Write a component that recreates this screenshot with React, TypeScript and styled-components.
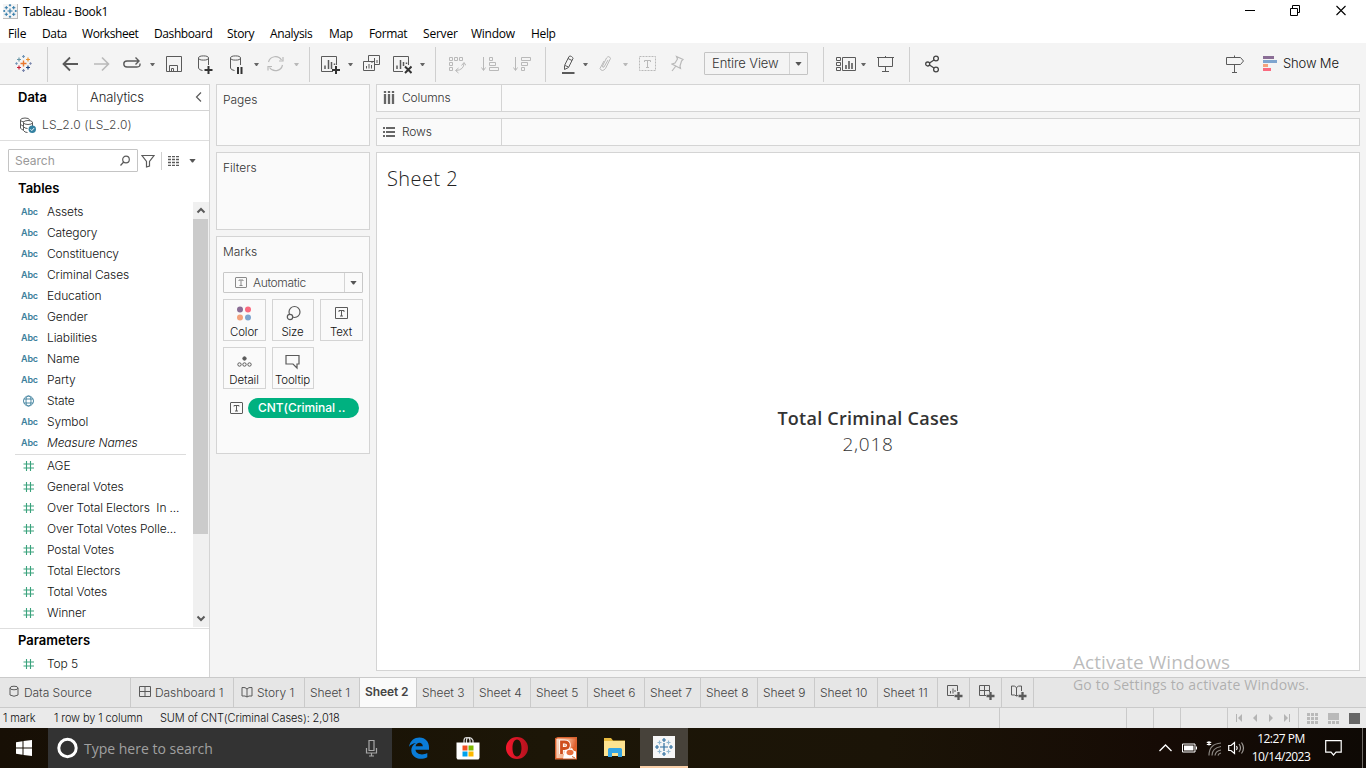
import React from 'react';
import styled, { createGlobalStyle, css } from 'styled-components';

const GlobalStyle = createGlobalStyle`
  * { box-sizing: border-box; }
  body { margin: 0; overflow: hidden; background: #fff; }
  svg { display: block; flex: none; }
`;

const ui = '"Inter", "Roboto", sans-serif';
const system = '"Open Sans", "Noto Sans", sans-serif';
const line = '#d4d4d4';
const ink = '#5a5a5a';
const faint = '#b9b9b9';

const Page = styled.div`
  width: 1366px;
  height: 768px;
  display: flex;
  flex-direction: column;
  position: relative;
  font: 300 12px ${ui};
  letter-spacing: -0.12px;
  color: #222;
  background: #f4f4f4;
  white-space: pre;
`;

/* ---------- window chrome ---------- */
const TitleBar = styled.header`
  height: 22px;
  background: #fff;
  display: flex;
  align-items: center;
  padding: 1px 20px 0 3px;
  font: 12px ${system};
  letter-spacing: -0.33px;
  color: #000;
`;
const AppIcon = styled.span`
  width: 15px;
  height: 15px;
  margin-right: 5px;
  background: #f4f4f4;
  border-right: 1px solid #bbb;
  border-bottom: 1px solid #bbb;
`;
const Grow = styled.span`flex: 1;`;
const WindowButton = styled.span<{ $ml?: number }>`
  margin: -2px 0 0 ${p => p.$ml ?? 0}px;
`;

const MenuBar = styled.nav`
  height: 21px;
  background: #fff;
  display: flex;
  padding-left: 8px;
  font: 12px/24px ${system};
  color: #000;
`;
const MenuItem = styled.span<{ $w: number; $ls?: number }>`
  width: ${p => p.$w}px;
  letter-spacing: ${p => p.$ls ?? -0.35}px;
`;

/* ---------- toolbar ---------- */
const Toolbar = styled.div`
  height: 41px;
  display: flex;
  align-items: flex-start;
  padding: 10px 0 0 15px;
`;
const Tool = styled.span<{ $ml: number; $mt?: number }>`
  margin: ${p => p.$mt ?? 0}px 0 0 ${p => p.$ml}px;
`;
const Rule = styled.span<{ $ml: number }>`
  width: 1px;
  height: 35px;
  margin: -6px 0 0 ${p => p.$ml}px;
  background: #cfcfcf;
`;
const CaretMark = styled.span<{ $ml: number; $c?: string }>`
  width: 5px;
  height: 3px;
  margin: 10px 0 0 ${p => p.$ml}px;
  background: ${p => p.$c ?? '#666'};
  clip-path: polygon(0 0, 100% 0, 60% 100%, 40% 100%);
`;
const bigCaret = css`
  width: 7px;
  height: 4px;
  background: #555;
  clip-path: polygon(0 0, 100% 0, 57% 100%, 43% 100%);
`;
const FitSelect = styled.div`
  display: flex;
  width: 104px;
  height: 23px;
  margin: -1px 0 0 20px;
  border: 1px solid #c4c4c4;
  border-radius: 1px;
  font-size: 13px;
  line-height: 21px;
  color: #333;
  letter-spacing: -0.1px;
  padding-left: 7px;
`;
const SelectArrow = styled.span<{ $w: number }>`
  width: ${p => p.$w}px;
  margin-left: auto;
  border-left: 1px solid ${line};
  display: flex;
  align-items: center;
  justify-content: center;
  &::after {
    content: '';
    ${bigCaret}
  }
`;
const ShowMe = styled.span`
  margin: 0 0 0 6px;
  font-size: 13px;
  line-height: 20px;
  letter-spacing: -0.15px;
  color: #111;
`;

/* ---------- workspace ---------- */
const Workspace = styled.main`
  height: 593px;
  display: flex;
`;
const DataPane = styled.aside`
  width: 210px;
  background: #fff;
  border-right: 1px solid ${line};
  border-top: 1px solid ${line};
  display: flex;
  flex-direction: column;
`;
const PaneTabs = styled.div`
  display: flex;
  height: 26px;
  font-size: 13px;
  line-height: 25px;
`;
const ActivePaneTab = styled.b`
  width: 77px;
  padding-left: 18px;
  font-weight: 600;
  color: #000;
  letter-spacing: 0;
`;
const PaneTab = styled.span`
  flex: 1;
  display: flex;
  justify-content: space-between;
  padding: 0 7px 0 12px;
  border-left: 1px solid ${line};
  border-bottom: 1px solid ${line};
`;
const SourceRow = styled.div`
  height: 30px;
  display: flex;
  align-items: center;
  gap: 6px;
  padding: 0 0 2px 20px;
  border-bottom: 1px solid #dedede;
  color: #444;
  letter-spacing: 0.2px;
`;
const SearchRow = styled.div`
  display: flex;
  height: 23px;
  margin: 8px 0 0 8px;
  align-items: center;
`;
const SearchBox = styled.div`
  width: 130px;
  height: 23px;
  border: 1px solid #c4c4c4;
  border-radius: 1px;
  display: flex;
  align-items: center;
  justify-content: space-between;
  padding: 0 6px 0 6px;
  color: #999;
  font-weight: 400;
  letter-spacing: 0;
`;
const SmallRule = styled.span`
  width: 1px;
  height: 18px;
  margin: 0 6px 0 6px;
  background: #cfcfcf;
`;
const BigCaret = styled.span`
  margin-left: 9px;
  ${bigCaret}
`;
const Heading = styled.b`
  display: block;
  padding-left: 18px;
  font-size: 13px;
  line-height: 16px;
  font-weight: 600;
  color: #000;
  letter-spacing: 0;
`;
const TablesHeading = styled(Heading)`margin-top: 8px;`;
const ListArea = styled.div`
  display: flex;
  justify-content: space-between;
  height: 426px;
  margin: 5px 0 1px;
`;
const FieldList = styled.div`width: 192px;`;
const Field = styled.div<{ $italic?: boolean }>`
  height: 21px;
  display: flex;
  align-items: center;
  color: #111;
  font-style: ${p => (p.$italic ? 'italic' : 'normal')};
`;
const FieldType = styled.span<{ $inset?: number }>`
  width: ${p => 26 - (p.$inset ?? 0)}px;
  margin-left: ${p => 21 + (p.$inset ?? 0)}px;
  display: flex;
  font: 600 9px ${ui};
  letter-spacing: -0.15px;
  color: #3d7f9c;
`;
const FieldRule = styled.div`
  height: 1px;
  margin: 1px 6px 0 15px;
  background: #dcdcdc;
`;
const Scrollbar = styled.div`
  width: 16px;
  margin-top: 1px;
  background: #f0f0f0;
  display: flex;
  flex-direction: column;
  align-items: center;
`;
const Thumb = styled.div`
  width: 15px;
  height: 315px;
  margin: 0 1px auto 0;
  background: #cbcbcb;
`;
const Parameters = styled.div`
  border-top: 1px solid #dedede;
  padding-top: 3px;
  flex: 1;
  ${Field} { margin-top: 5px; }
`;

/* ---------- shelves and cards ---------- */
const Cards = styled.section`
  width: 154px;
  margin-left: 6px;
  display: flex;
  flex-direction: column;
  gap: 6px;
`;
const Card = styled.div<{ $h: number }>`
  height: ${p => p.$h}px;
  border: 1px solid ${line};
  background: #fafafa;
  padding: 0 6px;
  color: #333;
  line-height: 30px;
  letter-spacing: -0.03px;
`;
const CardTitle = styled.div`height: 35px;`;
const MarkSelect = styled.div`
  height: 21px;
  display: flex;
  align-items: center;
  border: 1px solid #c8c8c8;
  border-radius: 1px;
  padding-left: 11px;
  gap: 6px;
  letter-spacing: -0.35px;
  color: #444;
  line-height: 19px;
  ${SelectArrow} { height: 19px; }
`;
const MarkGrid = styled.div`
  display: grid;
  grid-template-columns: 43px 42px 43px;
  column-gap: 6px;
  row-gap: 6px;
  margin-top: 6px;
`;
const MarkButton = styled.div`
  height: 42px;
  border: 1px solid ${line};
  display: flex;
  flex-direction: column;
  align-items: center;
  padding: 4px 1px 0 0;
  color: #111;
  font-size: 11.5px;
  line-height: 16px;
  letter-spacing: -0.12px;
  gap: 2px;
`;
const PillRow = styled.div`
  display: flex;
  align-items: center;
  margin-top: 9px;
  padding-left: 7px;
  gap: 5px;
`;
const Pill = styled.span`
  width: 111px;
  height: 20px;
  border-radius: 10px;
  background: #00b180;
  color: #fff;
  font-weight: 500;
  line-height: 20px;
  padding-left: 10px;
  letter-spacing: -0.05px;
`;
const Stage = styled.section`
  width: 984px;
  margin-left: 6px;
  display: flex;
  flex-direction: column;
  gap: 6px;
`;
const Shelf = styled.div`
  height: 28px;
  border: 1px solid ${line};
  background: #fafafa;
  display: flex;
`;
const ShelfLabel = styled.span`
  width: 125px;
  border-right: 1px solid ${line};
  display: flex;
  align-items: center;
  gap: 7px;
  padding: 0 0 1px 6px;
  color: #333;
`;
const Sheet = styled.div`
  height: 519px;
  border: 1px solid ${line};
  background: #fff;
  display: flex;
  flex-direction: column;
`;
const SheetTitle = styled.div`
  height: 50px;
  padding-left: 10px;
  font: 300 20px/51px "Open Sans", sans-serif;
  letter-spacing: 0.45px;
  color: #222;
`;
const View = styled.div`
  flex: 1;
  display: flex;
  flex-direction: column;
  align-items: center;
  justify-content: center;
  padding-bottom: 12px;
  color: #333;
  font: 300 19px/26px "Open Sans", sans-serif;
  letter-spacing: 0.7px;
  b { font-weight: 600; font-size: 18px; letter-spacing: 0.25px; }
`;

/* ---------- sheet tabs and status ---------- */
const TabBar = styled.div`
  height: 31px;
  display: flex;
  border-top: 1px solid #cacaca;
  border-bottom: 1px solid #cacaca;
  background: #e6e6e6;
`;
const Tab = styled.div<{ $w: number; $active?: boolean; $pl?: number }>`
  width: ${p => p.$w}px;
  padding-left: ${p => p.$pl ?? 5}px;
  border-right: 1px solid #cacaca;
  display: flex;
  align-items: center;
  color: #444;
  letter-spacing: -0.05px;
  ${p => p.$active && css`
    background: #fafafa;
    font-weight: 600;
    padding-bottom: 2px;
    letter-spacing: -0.1px;
  `}
`;
const TabIcon = styled.span<{ $mr: number }>`margin: 0 ${p => p.$mr}px 2px 0;`;
const StatusBar = styled.div`
  height: 20px;
  background: #eaeaea;
  display: flex;
  padding-left: 3px;
  font-size: 11px;
  line-height: 20px;
  letter-spacing: -0.1px;
  color: #111;
`;
const StatusText = styled.span<{ $w: number }>`width: ${p => p.$w}px;`;
const StatusCell = styled.span<{ $w: number; $pl?: number; $gap?: number }>`
  width: ${p => p.$w}px;
  border-left: 1px solid #cacaca;
  display: flex;
  align-items: center;
  padding-left: ${p => p.$pl ?? 0}px;
  gap: ${p => p.$gap ?? 0}px;
`;

/* ---------- taskbar ---------- */
const Taskbar = styled.footer`
  height: 40px;
  display: flex;
  background: linear-gradient(90deg, #170f05, #1c1607 40%, #1b1407 65%, #160b05 85%, #0e0905);
  font-family: ${system};
  font-weight: 400;
`;
const Start = styled.span`
  width: 48px;
  padding: 12px 0 0 16px;
`;
const TaskSearch = styled.div`
  width: 344px;
  background: #333;
  display: flex;
  align-items: center;
  padding: 0 14px 0 9px;
  font-size: 14px;
  letter-spacing: 0;
  color: #a0a0a0;
`;
const SearchText = styled.span`margin: 0 auto 0 6px;`;
const Slot = styled.span<{ $active?: boolean }>`
  width: 49px;
  display: flex;
  align-items: center;
  justify-content: center;
  ${p => p.$active && css`
    width: 48px;
    margin-left: 1px;
    background: #47423a;
    border-bottom: 2px solid #f9cfa8;
  `}
`;
const Slots = styled.div`
  display: flex;
  margin: 0 auto 0 2px;
`;
const Tray = styled.div`
  display: flex;
  align-items: center;
  color: #fff;
`;
const Clock = styled.div`
  width: 62px;
  margin: 0 13px 0 5px;
  text-align: center;
  font-size: 12px;
  line-height: 18px;
  letter-spacing: -0.5px;
`;
const PeekEdge = styled.span`
  width: 4px;
  height: 40px;
  margin-left: 20px;
  border-left: 1px solid #6f6b66;
`;

const Watermark = styled.div`
  position: absolute;
  left: 1073px;
  top: 649px;
  font-family: ${system};
  font-weight: 400;
  color: rgba(120, 120, 120, 0.5);
  pointer-events: none;
`;
const WatermarkTitle = styled.div`
  font-size: 19px;
  line-height: 26px;
  letter-spacing: 0.07px;
`;
const WatermarkText = styled.div`
  font-size: 14px;
  line-height: 20px;
  letter-spacing: 0.19px;
`;

/* ---------- icons ---------- */
type IconProps = { w: number; h?: number; c?: string; sw?: number; children: React.ReactNode };
const Icon = ({ w, h = 21, c = ink, sw = 1, children }: IconProps) => (
  <svg width={w} height={h} viewBox={`0 0 ${w} ${h}`} fill="none" stroke={c} strokeWidth={sw}>{children}</svg>
);

const plus = (x: number, y: number, r: number) => `M${x - r} ${y}h${2 * r}M${x} ${y - r}v${2 * r}`;

const TableauMark = ({ size = 17, colors }: { size?: number; colors?: string }) => {
  const c = (own: string) => colors ?? own;
  return (
    <svg width={size} height={size} viewBox="0 0 17 17" fill="none" strokeWidth="1.2">
      <path d={plus(8.5, 8.5, 3)} stroke={c('#e8762d')} strokeWidth="1.4" />
      <path d={plus(4, 4.5, 2)} stroke={c('#6b98a8')} />
      <path d={plus(13, 4.5, 2)} stroke={c('#eb912c')} />
      <path d={plus(4, 12.5, 2)} stroke={c('#c72035')} />
      <path d={plus(13, 12.5, 2)} stroke={c('#1f447e')} />
      <path d={plus(8.5, 1.5, 1.4) + plus(1.5, 8.5, 1.2)} stroke={c('#6f93b5')} />
      <path d={plus(8.5, 15.5, 1.4) + plus(15.5, 8.5, 1.2)} stroke={c('#7a86ad')} />
    </svg>
  );
};

const DbShape = () => (
  <>
    <ellipse cx="5.5" cy="5" rx="5" ry="2.1" />
    <path d="M.5 5v10q.3 2 4 2.5M10.500 5v7" />
  </>
);
const Hash = () => (
  <FieldType $inset={2}>
    <Icon w={12} h={12} c="#3aa27c" sw={1.1}><path d="M3.500 1v10M7.500 1v10M.500 4h10.500M.500 8h10.500" /></Icon>
  </FieldType>
);
const Globe = () => (
  <FieldType $inset={2}>
    <Icon w={12} h={12} c="#3d7f9c" sw={0.9}>
      <circle cx="5.500" cy="6" r="5" /><ellipse cx="5.500" cy="6" rx="2.500" ry="5" /><path d="M1 4h9M1 8h9" />
    </Icon>
  </FieldType>
);
const Abc = () => <FieldType>Abc</FieldType>;
const TextMark = ({ c = ink, w = 13, h = 12 }: { c?: string; w?: number; h?: number }) => (
  <Icon w={w} h={h} c={c}>
    <rect x=".5" y=".5" width={w - 1} height={h - 1} rx=".5" />
    <path d={`M4 ${h / 2 - 1.5}v-1h${w - 8}v1M${w / 2} ${h / 2 - 2.5}v5.500M${w / 2 - 1.5} ${h / 2 + 3}h3`} />
  </Icon>
);
const Grid4 = () => (
  <Icon w={12} h={12}><path d="M.5.5h11v10h-11zM6 .5v10M.5 5.500h11" /></Icon>
);
const BookPath = 'M1 1.500Q4.500 1 6 3Q7.500 1 11 1.500V10Q7.500 9.500 6 11Q4.500 9.500 1 10ZM6 3v8';
const NewTab = ({ children }: { children: React.ReactNode }) => (
  <Icon w={16} h={15}>{children}<path d={plus(11.500, 11, 4)} strokeWidth="2.300" /></Icon>
);

const dims = ['Assets', 'Category', 'Constituency', 'Criminal Cases', 'Education', 'Gender', 'Liabilities', 'Name', 'Party', 'State', 'Symbol'];
const measures = ['AGE', 'General Votes', 'Over Total Electors  In ...', 'Over Total Votes Polle...', 'Postal Votes', 'Total Electors', 'Total Votes', 'Winner'];
const menus: [string, number, number?][] = [
  ['File', 34, -0.2], ['Data', 40], ['Worksheet', 72, -0.45], ['Dashboard', 73, -0.4], ['Story', 43], ['Analysis', 59],
  ['Map', 40], ['Format', 54], ['Server', 48, -0.2], ['Window', 60, -0.25], ['Help', 40],
];
const sheets: [string, number][] = [
  ['Sheet 3', 57], ['Sheet 4', 57], ['Sheet 5', 57], ['Sheet 6', 57], ['Sheet 7', 56], ['Sheet 8', 57], ['Sheet 9', 57], ['Sheet 10', 63], ['Sheet 11', 60],
];

const ToolbarIcons = () => (
  <Toolbar>
    <Tool $ml={0} $mt={2}><TableauMark /></Tool>
    <Rule $ml={15} />
    <Tool $ml={14}><Icon w={16} sw={1.8}><path d="M16 11H1M8 4.500L1.500 11L8 17.500" /></Icon></Tool>
    <Tool $ml={16}><Icon w={16} c={faint} sw={1.6}><path d="M0 11h15M8 4.500l6.500 6.500L8 17.500" /></Icon></Tool>
    <Tool $ml={13}><Icon w={18} sw={1.400}><path d="M10 14H4Q.8 14 .8 11T4 8H15M12.500 4.500L16 8L12.500 11.500M17 10.500Q17.500 14 14 14H10" /></Icon></Tool>
    <CaretMark $ml={9} />
    <Tool $ml={11}><Icon w={16}><path d="M.5 3.500h15v15H.5zM3.500 18v-5.500h8V18M5.500 18v-2.500h2V18" /></Icon></Tool>
    <Tool $ml={16}><Icon w={15}><DbShape /><path d={plus(10.500, 17, 4)} stroke="#333" strokeWidth="2" /></Icon></Tool>
    <Tool $ml={17}><Icon w={14}><DbShape /><path d="M8 14v7M11.500 14v7" stroke="#333" strokeWidth="2" /></Icon></Tool>
    <CaretMark $ml={10} />
    <Tool $ml={8}><Icon w={17} c={faint} sw={1.200}><path d="M1.500 9A7.200 7.200 0 0 1 14.500 7M16 4v4h-4M15.500 12A7.200 7.200 0 0 1 2.500 14.500M1 17.500v-4h4" /></Icon></Tool>
    <CaretMark $ml={10} $c={faint} />
    <Rule $ml={10} />
    <Tool $ml={11}>
      <Icon w={19}><path d="M12 18.500H.5V3.500h15V12" /><path d="M4 16v-3.500M7.500 16V7M10.500 16V9M13.500 12v-1.500" strokeWidth="1.500" /><path d={plus(15, 17, 4)} stroke="#333" strokeWidth="2" /></Icon>
    </Tool>
    <CaretMark $ml={8} />
    <Tool $ml={10}>
      <Icon w={17}><path d="M5.500 8V2.500h11v9H11.500M.5 8.500h11v9H.5zM9 10V8M11.500 10V5M14 10V7M3.500 15.500V13M6 15.500V11M8.500 15.500V12" /></Icon>
    </Tool>
    <Tool $ml={13}>
      <Icon w={19}><path d="M10 18.500H.5V3.500h15V12" /><path d="M4 16v-3.500M7.500 16V7M10.500 13V9M13.500 11v-1.500" strokeWidth="1.500" /><path d="M12 13.500l6.500 6.500M18.500 13.500L12 20" stroke="#333" strokeWidth="2" /></Icon>
    </Tool>
    <CaretMark $ml={8} />
    <Rule $ml={10} />
    <Tool $ml={13}>
      <Icon w={17} c={faint}><path d="M.5 4.500h3v3h-3zM5.500 4.500h3v3h-3zM10.500 4.500h3v3h-3zM.5 9.500h3v3h-3zM.5 14.500h3v3h-3zM15 10Q15 17 7 17.500M12.500 12.500L15 9.500L17 12.500M9.500 15L6.500 17.500L9.500 20" /></Icon>
    </Tool>
    <Tool $ml={15}><Icon w={18} c={faint}><path d="M2.500 4v13M.5 14.500L2.500 17.500L4.500 14.500M8.500 4.500h3v3h-3zM8.500 9.500h6v3h-6zM8.500 14.500h9v3h-9z" /></Icon></Tool>
    <Tool $ml={14}><Icon w={18} c={faint}><path d="M2.500 4v13M.5 14.500L2.500 17.500L4.500 14.500M8.500 4.500h9v3h-9zM8.500 9.500h6v3h-6zM8.500 14.500h3v3h-3z" /></Icon></Tool>
    <Rule $ml={14} />
    <Tool $ml={16}>
      <Icon w={13}><path d="M2.500 12.500L7 3.500Q8 2.500 9.500 3.500T11 5.500L6.500 14.500L2.500 16.500ZM3 12.500l3.500 1.500M6 5.500l4 2" /><path d="M0 20h12.500" strokeWidth="2" /></Icon>
    </Tool>
    <CaretMark $ml={8} />
    <Tool $ml={11}>
      <Icon w={12} c={faint}><path d="M9 7L5 14Q3.500 15 3.500 13L7.500 5Q10 2 11.500 5.500L6.500 15.500Q3 19.500 1 15.500L5 8" /></Icon>
    </Tool>
    <CaretMark $ml={12} $c={faint} />
    <Tool $ml={11}>
      <Icon w={17} c={faint}><path d="M.5 3.500h16v14H.5z" strokeDasharray="2 1" /><path d="M5.500 9V7.500h6V9M8.500 7.500v7M7 14.500h3" /></Icon>
    </Tool>
    <Tool $ml={15}>
      <Icon w={13} c={faint} sw={1.200}><path d="M5.500 3.500L12 6.500L10.500 8L9 13L9.500 15.500L1 11L4 10L6.500 6ZM4.500 13.500L1 18" /></Icon>
    </Tool>
    <FitSelect>Entire View<SelectArrow $w={18} /></FitSelect>
    <Rule $ml={15} />
    <Tool $ml={12}>
      <Icon w={20}><path d="M.5 4.500h4v3h-4zM.5 9.500h4v3h-4zM.5 14.500h4v3h-4zM6.500 4.500h13v13h-13z" /><path d="M10 16v-4M13 16V8M16 16V10" strokeWidth="1.600" /></Icon>
    </Tool>
    <CaretMark $ml={5} />
    <Tool $ml={11}><Icon w={18}><path d="M0 4.500h17M1.500 4.500v9h14v-9M8.500 3v1M8.500 13.500v5M5 18.500h7" /></Icon></Tool>
    <Rule $ml={14} />
    <Tool $ml={15}>
      <Icon w={14} c="#444" sw={1.300}><circle cx="2.700" cy="11" r="2" /><circle cx="11" cy="5.500" r="2.400" /><circle cx="11" cy="16.500" r="2.400" /><path d="M4.500 10L9 7M4.500 12L9 15" /></Icon>
    </Tool>
    <Tool $ml={287}><Icon w={18}><path d="M.5 4.500h14l3 3.500l-3 3.500H.5zM8.500 2.500v2M8.500 11.500v8M6 19.500h5" /></Icon></Tool>
    <Tool $ml={19}>
      <Icon w={14} sw={3}><path d="M0 4.500h11" stroke="#8a6d95" /><path d="M0 8.500h14" stroke="#7fa5cf" /><path d="M0 12.500h5" stroke="#f4a27c" /><path d="M0 16.500h8" stroke="#fa6a7f" /></Icon>
    </Tool>
    <ShowMe>Show Me</ShowMe>
  </Toolbar>
);

const DataPanel = () => (
  <DataPane>
    <PaneTabs>
      <ActivePaneTab>Data</ActivePaneTab>
      <PaneTab>Analytics<Icon w={7} h={24} sw={1.200}><path d="M6 7.500L1.500 12L6 16.500" /></Icon></PaneTab>
    </PaneTabs>
    <SourceRow>
      <Icon w={16} h={16}>
        <ellipse cx="5" cy="3" rx="4.500" ry="2" /><path d="M.5 3v8q1 2 3 2M.5 7q1 2 3 2" /><ellipse cx="8" cy="5.500" rx="4.500" ry="2" fill="#fff" /><path d="M3.500 5.500v8q1 2 4 2M12.500 5.500V9M3.500 9.500q1 2 4 2" />
        <circle cx="12.300" cy="12.300" r="3.700" fill="#3381a1" stroke="none" /><path d="M10.500 12.300l1.300 1.300l2.300-2.500" stroke="#fff" />
      </Icon>
      LS_2.0 (LS_2.0)
    </SourceRow>
    <SearchRow>
      <SearchBox>Search<Icon w={12} h={12} sw={1.200}><circle cx="7" cy="4.500" r="3.300" /><path d="M4.700 7L1.500 10.500" /></Icon></SearchBox>
      <Tool $ml={3}><Icon w={14} h={14} sw={1.200}><path d="M1 1.500h12L8.500 7.500v4.500l-3 1V7.500z" /></Icon></Tool>
      <SmallRule />
      <Icon w={12} h={10}><path d="M0 .5h12M0 3.500h12M0 6.500h12M0 9.500h12" strokeDasharray="3 1" strokeWidth="1.500" /></Icon>
      <BigCaret />
    </SearchRow>
    <TablesHeading>Tables</TablesHeading>
    <ListArea>
      <FieldList>
        {dims.map(d => <Field key={d}>{d === 'State' ? <Globe /> : <Abc />}{d}</Field>)}
        <Field $italic><Abc />Measure Names</Field>
        <FieldRule />
        {measures.map(m => <Field key={m}><Hash />{m}</Field>)}
      </FieldList>
      <Scrollbar>
        <Icon w={16} h={17} sw={2}><path d="M4.500 10.500L8 7L11.500 10.500" /></Icon>
        <Thumb />
        <Icon w={16} h={17} sw={2}><path d="M4.500 6.500L8 10L11.500 6.500" /></Icon>
      </Scrollbar>
    </ListArea>
    <Parameters>
      <Heading>Parameters</Heading>
      <Field><Hash />Top 5</Field>
    </Parameters>
  </DataPane>
);

const MarksCard = () => (
  <Card $h={218}>
    <CardTitle>Marks</CardTitle>
    <MarkSelect><TextMark c="#8a8a8a" w={12} h={11} />Automatic<SelectArrow $w={18} /></MarkSelect>
    <MarkGrid>
      <MarkButton>
        <svg width="14" height="18" viewBox="0 0 14 18"><circle cx="3" cy="5.500" r="3" fill="#8a6d95" /><circle cx="11" cy="5.500" r="3" fill="#fa6a7f" /><circle cx="3" cy="13.500" r="3" fill="#f4a27c" /><circle cx="11" cy="13.500" r="3" fill="#7fa5cf" /></svg>
        Color
      </MarkButton>
      <MarkButton>
        <Icon w={16} h={18} sw={1.200}><circle cx="9.500" cy="8" r="5.500" /><circle cx="5" cy="13" r="2.700" fill="#fafafa" /></Icon>Size
      </MarkButton>
      <MarkButton><Icon w={13} h={18}><path d="M.5 3.500h12v11H.5zM4 8V6.500h5V8M6.500 6.500v5.500M5 12h3" /></Icon>Text</MarkButton>
      <MarkButton>
        <Icon w={15} h={18}><circle cx="7.500" cy="6.500" r="1.700" fill={ink} /><circle cx="2.500" cy="12.500" r="1.700" /><circle cx="7.500" cy="12.500" r="1.700" /><circle cx="12.500" cy="12.500" r="1.700" /></Icon>Detail
      </MarkButton>
      <MarkButton><Icon w={15} h={18} sw={1.200}><path d="M1 3.500h13v8.500h-2v4L8 12H1z" /></Icon>Tooltip</MarkButton>
    </MarkGrid>
    <PillRow><TextMark /><Pill>CNT(Criminal ..</Pill></PillRow>
  </Card>
);

export default function App() {
  return (
    <Page>
      <GlobalStyle />
      <TitleBar>
        <AppIcon><TableauMark size={14} colors="#2f79a8" /></AppIcon>
        Tableau - Book1
        <Grow />
        <WindowButton><Icon w={10} h={11} c="#000"><path d="M0 5.500h10" /></Icon></WindowButton>
        <WindowButton $ml={35}><Icon w={10} h={11} c="#000"><path d="M.5 3.500h7v7h-7zM2.500 3V.5h7v7H8" /></Icon></WindowButton>
        <WindowButton $ml={36}><Icon w={10} h={11} c="#000" sw={1.100}><path d="M.5 1l9 9M9.500 1l-9 9" /></Icon></WindowButton>
      </TitleBar>
      <MenuBar>{menus.map(([t, w, ls]) => <MenuItem key={t} $w={w} $ls={ls}>{t}</MenuItem>)}</MenuBar>
      <ToolbarIcons />
      <Workspace>
        <DataPanel />
        <Cards>
          <Card $h={62}>Pages</Card>
          <Card $h={78}>Filters</Card>
          <MarksCard />
        </Cards>
        <Stage>
          <Shelf><ShelfLabel><Icon w={12} h={13} sw={2.300} c="#666"><path d="M2 0v2M2 3v10M6 0v2M6 3v10M10 0v2M10 3v10" /></Icon>Columns</ShelfLabel></Shelf>
          <Shelf><ShelfLabel><Icon w={12} h={12} sw={2} c="#666"><path d="M0 2h2M3 2h9M0 6h2M3 6h9M0 10h2M3 10h9" /></Icon>Rows</ShelfLabel></Shelf>
          <Sheet>
            <SheetTitle>Sheet 2</SheetTitle>
            <View><b>Total Criminal Cases</b>2,018</View>
          </Sheet>
        </Stage>
      </Workspace>
      <TabBar>
        <Tab $w={131} $pl={9}>
          <TabIcon $mr={5}><Icon w={10} h={13}><ellipse cx="5" cy="3" rx="4" ry="1.800" /><path d="M1 3v7q4 2.500 8 0V3" /></Icon></TabIcon>Data Source
        </Tab>
        <Tab $w={103} $pl={8}><TabIcon $mr={4}><Grid4 /></TabIcon>Dashboard 1</Tab>
        <Tab $w={71} $pl={7}><TabIcon $mr={4}><Icon w={12} h={12}><path d={BookPath} /></Icon></TabIcon>Story 1</Tab>
        <Tab $w={55}>Sheet 1</Tab>
        <Tab $w={57} $active>Sheet 2</Tab>
        {sheets.map(([t, w]) => <Tab key={t} $w={w}>{t}</Tab>)}
        <Tab $w={32} $pl={9}><NewTab><path d="M7 10.500H.5V.5h10V6M3.500 8.500V6M6 8.500V3.500M8 7V5" /></NewTab></Tab>
        <Tab $w={32} $pl={9}><NewTab><path d="M7 10.500H.5V.5h10V7M5.500 .5v10M.5 5.500h10" /></NewTab></Tab>
        <Tab $w={32} $pl={9}><NewTab><path d="M7 10.500L5.500 11Q4 9.500.5 10V1Q4 .5 5.500 2.500Q7 .5 10.500 1V6M5.500 2.500V11" /></NewTab></Tab>
      </TabBar>
      <StatusBar>
        <StatusText $w={51}>1 mark</StatusText>
        <StatusText $w={106}>1 row by 1 column</StatusText>
        <StatusText $w={839}>SUM of CNT(Criminal Cases): 2,018</StatusText>
        <StatusCell $w={127} /><StatusCell $w={27} /><StatusCell $w={27} /><StatusCell $w={47} />
        <StatusCell $w={71} $pl={8}>
          <svg width="56" height="8" viewBox="0 0 56 8" fill="#b4b4b4"><path d="M0 0h1v8H0zM6 0v8L2 4zM21 0v8l-4-4zM33 0v8l4-4zM48 0v8l4-4zM53 0h1v8h-1z" /></svg>
        </StatusCell>
        <StatusCell $w={68} $pl={8} $gap={10}>
          <Icon w={11} h={11} sw={3} c="#b9b9b9"><path d="M0 1.500h11M0 5.500h11M0 9.500h11" strokeDasharray="3 1" /></Icon>
          <Icon w={11} h={11} sw={3} c="#b9b9b9"><path d="M0 3.500h11" strokeWidth="7" /><path d="M0 9.500h11" strokeDasharray="3 1" /></Icon>
          <Icon w={11} h={11} sw={11} c="#666"><path d="M0 5.500h11" /></Icon>
        </StatusCell>
      </StatusBar>
      <Taskbar>
        <Start><svg width="16" height="16" viewBox="0 0 16 16" fill="#fff"><path d="M0 2.200L6.500 1.300V7.500H0zM7.500 1.100L16 0v7.500H7.500zM0 8.500h6.500v6.200L0 13.800zM7.500 8.500H16V16l-8.500-1.100z" /></svg></Start>
        <TaskSearch>
          <Icon w={21} h={22} c="#fff" sw={3}><circle cx="10.500" cy="11" r="8.700" /></Icon>
          <SearchText>Type here to search</SearchText>
          <Icon w={13} h={18} c="#a8a8a8" sw={1.200}><path d="M4 1.500h5v10H4zM1.500 9v5h10V9M6.500 14v3M4 17h5" /></Icon>
        </TaskSearch>
        <Slots>
          <Slot>
            <svg width="22" height="22" viewBox="0 0 22 22" fill="#0a7cd8"><path d="M1 10C2 3.500 6.500.5 11.500.5C17.500.5 21 5 21 10V12.800H7.500C7.800 17 14 19 19.300 16V20.200C12 24 3.500 21 3.300 13.300C3.300 10 5 7.500 8 6C4.500 6.500 2 8 1 10ZM7.600 9.300H14.800C14.800 4.500 8.200 4.500 7.600 9.300Z" /></svg>
          </Slot>
          <Slot>
            <svg width="24" height="24" viewBox="0 0 24 24"><path d="M8 7V4.500Q8 1.500 11 1.500T14 4.500V7M10.500 7V4.500Q10.500 1.500 13 1.500T17 4.500V7" fill="none" stroke="#ddd" strokeWidth="1.200" /><path d="M.5 6.500h23v15.500l-1 1.500h-21l-1-1.500z" fill="#fff" /><path d="M6.500 9.500h5v5h-5z" fill="#f05022" /><path d="M12.500 9.500h5v5h-5z" fill="#7eb900" /><path d="M6.500 15.500h5v5h-5z" fill="#00a2ed" /><path d="M12.500 15.500h5v5h-5z" fill="#fdb800" /></svg>
          </Slot>
          <Slot>
            <svg width="24" height="24" viewBox="0 0 24 24"><defs><linearGradient id="op" x2="1"><stop offset="0" stopColor="#f5182d" /><stop offset="1" stopColor="#b3121d" /></linearGradient></defs><path fillRule="evenodd" fill="url(#op)" d="M12 1a11 11 0 1 0 0 22a11 11 0 1 0 0-22ZM12 3.500C15 3.500 16.500 7.500 16.500 12S15 20.500 12 20.500S7.500 16.500 7.500 12S9 3.500 12 3.500Z" /></svg>
          </Slot>
          <Slot>
            <svg width="22" height="23" viewBox="0 0 22 23">
              <defs><linearGradient id="pp" x2="1" y2="0.300"><stop offset="0" stopColor="#fbe3d3" /><stop offset=".6" stopColor="#f3b08a" /><stop offset="1" stopColor="#dd5a28" /></linearGradient></defs>
              <path d="M.7 1.700L3 .7H21.300V21.800H.7z" fill="url(#pp)" stroke="#d9622f" strokeWidth="1.400" />
              <path d="M10 13l11-3v11.500H8z" fill="#fff" />
              <path d="M6.500 17V5H9.500Q13.500 5 13.500 8.200T9.500 11.500H6.500" fill="none" stroke="#fff" strokeWidth="4.500" />
              <path d="M6.500 17V5H9.500Q13.500 5 13.500 8.200T9.500 11.500H6.500" fill="none" stroke="#cf4f1d" strokeWidth="2.800" />
              <ellipse cx="15" cy="15.500" rx="3.500" ry="2.700" fill="#e9703f" /><path d="M17.500 10.500h3.500v3.500q-3 0-3.500-3.500zM17 19.500l3 1.500" fill="#e0642b" stroke="#e0642b" />
            </svg>
          </Slot>
          <Slot>
            <svg width="23" height="20" viewBox="0 0 23 20"><path d="M1 0h7l2 2.500h12V6H1z" fill="#e9bb3f" /><path d="M1 3h21v15H1z" fill="#fde390" /><path d="M5 19v-7.500Q5 10 6.500 10h11q1.500 0 1.500 1.500V19h-4v-4H9V19z" fill="#34a5e4" /></svg>
          </Slot>
          <Slot $active>
            <svg width="22" height="22" viewBox="0 0 22 22" fill="none"><path d="M0 0h22v22H0z" fill="#f6f6f6" /><path d={plus(11, 11, 4) + plus(11, 4, 2) + plus(11, 18, 2) + plus(4, 11, 2) + plus(18, 11, 2)} stroke="#2f6f9f" strokeWidth="1.200" /><path d={plus(6.500, 6.500, 2) + plus(15.500, 6.500, 2) + plus(6.500, 15.500, 2) + plus(15.500, 15.500, 2)} stroke="#8fb6cf" strokeWidth="1.200" /></svg>
          </Slot>
        </Slots>
        <Tray>
          <Icon w={13} h={8} c="#fff" sw={1.300}><path d="M.5 7L6.500 1L12.500 7" /></Icon>
          <Tool $ml={10}><Icon w={16} h={10} c="#fff"><path d="M.5 1h12.500v8H.5zM14.500 3.500v3" /><path d="M2 2.500h9.500v5H2z" fill="#fff" stroke="none" /></Icon></Tool>
          <Tool $ml={8}>
            <Icon w={17} h={16} c="#8b8782" sw={1.200}><path d="M3 1v4.500M.8 2L5.200 4.500M5.200 2L.8 4.500" stroke="#fff" /><path d="M3 15.500Q3 4 15 3M6 15.500Q6 8 15 6.500M9 15.500Q9.500 11 15 10M12 15.500q.5-2 3-2.500" /></Icon>
          </Tool>
          <Tool $ml={5}>
            <Icon w={17} h={14} c="#fff" sw={1.200}><path d="M.7 4.500H3L6.500 1.500v11L3 9.500H.7zM8.500 5q1.500 2 0 4" /><path d="M11 3q3 4 0 8M13.500 1.500q4 5.500 0 11" stroke="#a09c98" /></Icon>
          </Tool>
          <Clock>12:27 PM<br />10/14/2023</Clock>
          <Icon w={17} h={16} c="#fff" sw={1.200}><path d="M.7.700h15.500v11.500H11L8.500 15L6 12.200H.7z" /></Icon>
          <PeekEdge />
        </Tray>
      </Taskbar>
      <Watermark>
        <WatermarkTitle>Activate Windows</WatermarkTitle>
        <WatermarkText>Go to Settings to activate Windows.</WatermarkText>
      </Watermark>
    </Page>
  );
}
